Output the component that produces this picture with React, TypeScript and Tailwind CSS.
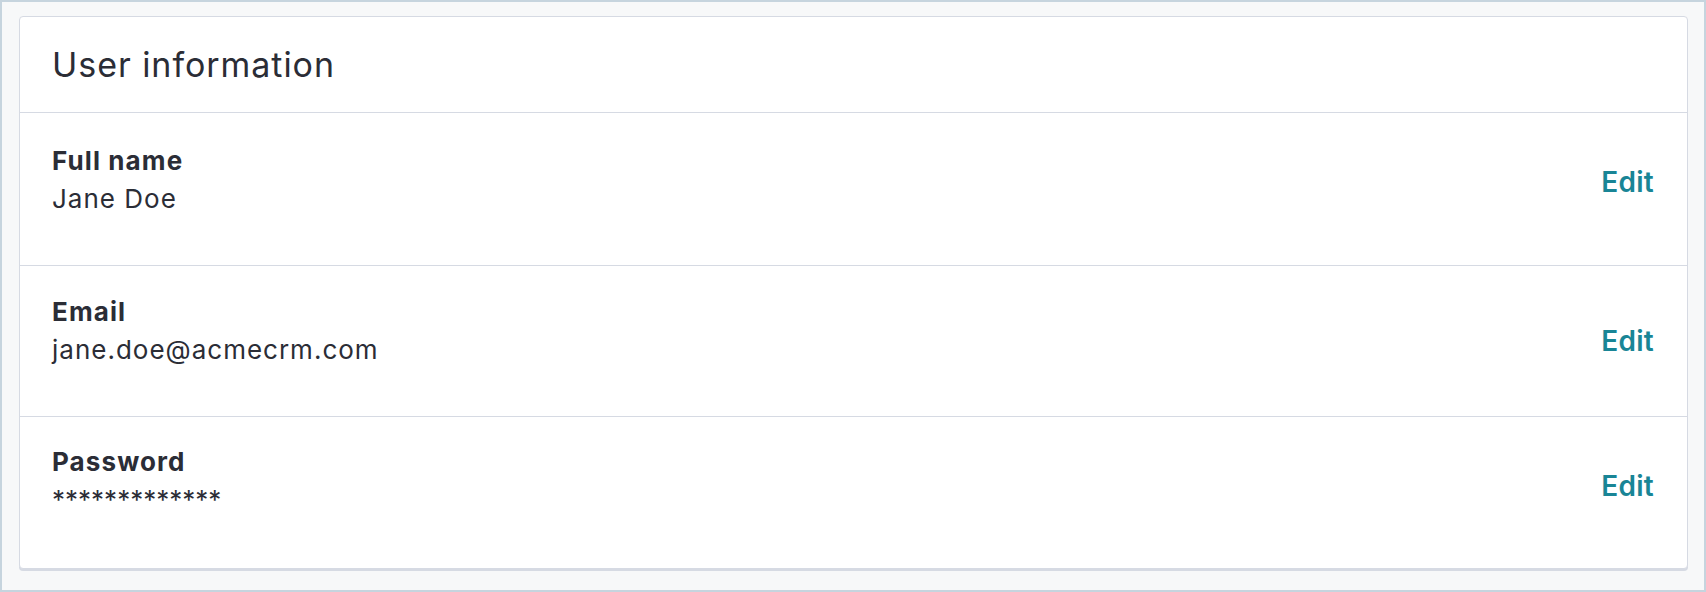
import React from "react";

const rows = [
  { label: "Full name", value: "Jane Doe", h: "h-[153px]", pt: "pt-[29px]", mt: "mt-[26px]", vt: "tracking-[1px]" },
  { label: "Email", value: "jane.doe@acmecrm.com", h: "h-[151px]", pt: "pt-[27px]", mt: "mt-[34px]", vt: "tracking-[1px]" },
  { label: "Password", value: "*************", h: "h-[151px]", pt: "pt-[26px]", mt: "mt-[29px]", vt: "tracking-normal" },
];

export default function App() {
  return (
    <div
      className="w-[1706px] h-[592px] border-2 border-[#c6d4de] bg-[#f7f8f9] pt-[14px] pl-[17px] pr-[16px]"
      style={{ fontFamily: "Inter, 'Noto Sans', sans-serif" }}
    >
      <div className="bg-white border border-[#d6dae3] rounded-[4px] shadow-[0_2px_0_#d6dae3] text-[#2b2d36]">
        <div className="h-[96px] border-b border-[#d6dae3] flex items-center pl-[32px] pr-[34px]">
          <h1 className="text-[34px] leading-[40px] font-normal tracking-[0.95px]">User information</h1>
        </div>
        {rows.map((r, i) => (
          <div
            key={r.label}
            className={`${r.h} ${i < rows.length - 1 ? "border-b border-[#d6dae3]" : ""} flex justify-between items-start pl-[32px] pr-[33px] ${r.pt}`}
          >
            <div>
              <div className="text-[26px] leading-[38px] font-bold tracking-[1.1px]">{r.label}</div>
              <div className={`text-[26px] leading-[38px] font-normal ${r.vt}`}>{r.value}</div>
            </div>
            <button className={`${r.mt} text-[28px] leading-[28px] font-semibold tracking-[0.3px] text-[#198596]`}>Edit</button>
          </div>
        ))}
      </div>
    </div>
  );
}
